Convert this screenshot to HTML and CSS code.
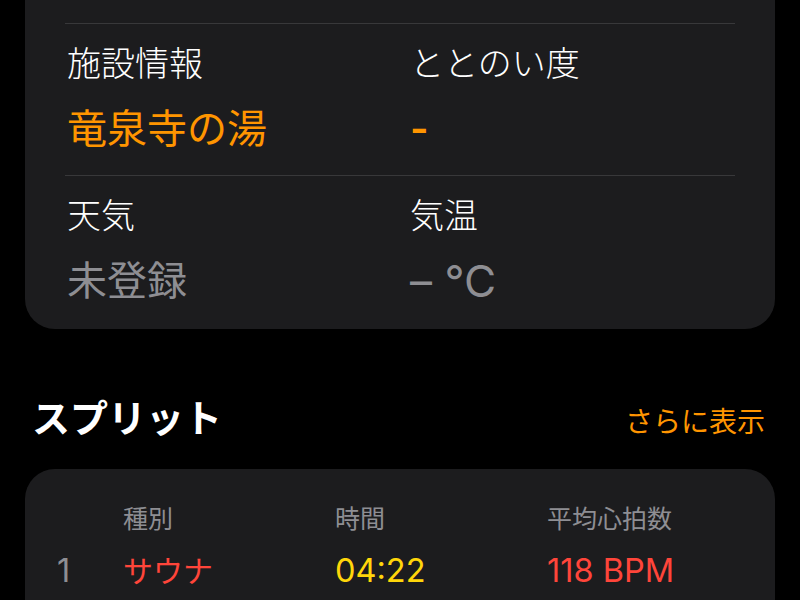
FILE: index.html
```html
<!DOCTYPE html>
<html lang="ja">
<head>
    <meta charset="UTF-8">
    <title>サウナ記録</title>
    <link rel="stylesheet" href="styles.css">
</head>
<body>
<div class="page">
    <div class="card info">
        <div class="info-row">
            <div class="field">
                <div class="label">施設情報</div>
                <div class="value orange">竜泉寺の湯</div>
            </div>
            <div class="field">
                <div class="label">ととのい度</div>
                <div class="value orange dash">-</div>
            </div>
        </div>
        <div class="info-row">
            <div class="field">
                <div class="label">天気</div>
                <div class="value gray">未登録</div>
            </div>
            <div class="field">
                <div class="label">気温</div>
                <div class="value gray temp">– °C</div>
            </div>
        </div>
    </div>

    <div class="section-head">
        <h2>スプリット</h2>
        <a class="more">さらに表示</a>
    </div>

    <div class="card split">
        <div class="split-row head">
            <span></span>
            <span>種別</span>
            <span>時間</span>
            <span>平均心拍数</span>
        </div>
        <div class="split-row">
            <span class="num latin">1</span>
            <span class="red">サウナ</span>
            <span class="yellow latin">04:22</span>
            <span class="red latin">118 BPM</span>
        </div>
    </div>
</div>
</body>
</html>
```

FILE: styles.css
```css
* {
    margin: 0;
    padding: 0;
    box-sizing: border-box;
}

body {
    background: #000;
    color: #fff;
    font-family: "Inter", "Noto Sans CJK JP", sans-serif;
    width: 800px;
    height: 600px;
    overflow: hidden;
}

.page {
    padding: 0 25px;
}

.card {
    background: #1c1c1e;
    border-radius: 30px;
}

.info {
    border-top-left-radius: 0;
    border-top-right-radius: 0;
    padding: 23px 40px 0;
}

.info-row {
    display: grid;
    grid-template-columns: 1fr 1fr;
    column-gap: 20px;
    border-top: 1px solid #38383a;
    padding: 20px 2px 22px;
}

.info-row:last-child {
    padding-bottom: 24px;
}

.label {
    font-size: 34px;
    line-height: 40px;
    font-weight: 300;
}

.value {
    font-size: 40px;
    line-height: 48px;
    margin-top: 21px;
}

.orange {
    color: #ff9500;
}

.gray {
    color: #8e8e93;
}

.dash {
    font-weight: 600;
}

.temp {
    font-size: 44px;
}

.section-head {
    display: flex;
    justify-content: space-between;
    align-items: baseline;
    padding: 66px 10px 0 7px;
}

.section-head h2 {
    font-size: 38px;
    line-height: 46px;
    font-weight: 700;
}

.more {
    color: #ff9500;
    font-size: 28px;
    line-height: 36px;
}

.split {
    margin-top: 28px;
    padding: 34px 32px 20px;
    border-bottom-left-radius: 0;
    border-bottom-right-radius: 0;
}

.split-row {
    display: grid;
    grid-template-columns: 66px 212px 212px 1fr;
    align-items: baseline;
    font-size: 30px;
    line-height: 40px;
    padding-top: 16px;
}

.split-row.head {
    font-size: 25px;
    line-height: 32px;
    color: #8e8e93;
    padding-top: 0;
}

.latin {
    font-size: 32.5px;
}

.num {
    color: #8e8e93;
}

.red {
    color: #ff453a;
}

.yellow {
    color: #ffd60a;
}
```
